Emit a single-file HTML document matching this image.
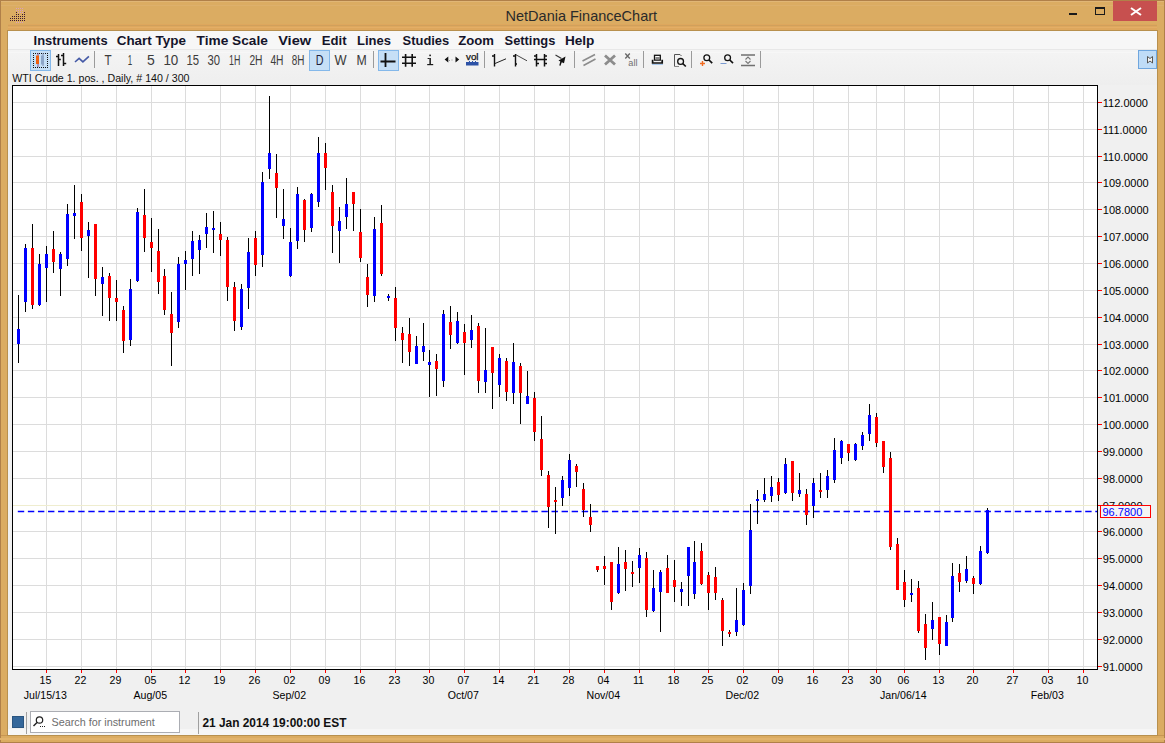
<!DOCTYPE html><html><head><meta charset="utf-8"><style>html,body{margin:0;padding:0;width:1165px;height:743px;overflow:hidden;background:#DBAC62}svg{display:block}text{font-family:"Liberation Sans",sans-serif}</style></head><body>
<svg width="1165" height="743" viewBox="0 0 1165 743">
<rect x="0" y="0" width="1165" height="743" fill="#DBAC62"/>
<rect x="0" y="0" width="1165" height="1" fill="#B08049"/>
<rect x="0" y="1" width="1165" height="1" fill="#E0B676"/>
<rect x="0" y="5" width="1165" height="1" fill="#DDB06C"/>
<rect x="8" y="24" width="1149" height="7" fill="#DEA75D"/>
<rect x="8" y="25" width="1149" height="1" fill="#D0A05C"/>
<rect x="8" y="27" width="1149" height="1" fill="#E3AE66"/>
<rect x="8" y="30" width="1149" height="1" fill="#C89652"/>
<rect x="0" y="735" width="1165" height="1" fill="#C89652"/>
<rect x="0" y="742" width="1165" height="1" fill="#B08049"/>
<rect x="0" y="0" width="1" height="743" fill="#B08049"/>
<rect x="1164" y="0" width="1" height="743" fill="#B08049"/>
<rect x="0" y="738" width="1165" height="2" fill="#E2B36C"/>
<rect x="16" y="8.0" width="1" height="1" fill="#D9A0C0"/>
<rect x="18" y="8.0" width="1" height="1" fill="#D9A0C0"/>
<rect x="20" y="8.0" width="1" height="1" fill="#D9A0C0"/>
<rect x="22" y="8.0" width="1" height="1" fill="#D9A0C0"/>
<rect x="16" y="10.0" width="1" height="1" fill="#D9A0C0"/>
<rect x="18" y="10.0" width="1" height="1" fill="#D9A0C0"/>
<rect x="20" y="10.0" width="1" height="1" fill="#D9A0C0"/>
<rect x="22" y="10.0" width="1" height="1" fill="#D9A0C0"/>
<rect x="18" y="12.0" width="1" height="1" fill="#D9A0C0"/>
<rect x="20" y="12.0" width="1" height="1" fill="#D9A0C0"/>
<rect x="22" y="12.0" width="1" height="1" fill="#D9A0C0"/>
<rect x="16" y="22.0" width="1" height="1" fill="#D9A0C0"/>
<rect x="18" y="22.0" width="1" height="1" fill="#D9A0C0"/>
<rect x="20" y="22.0" width="1" height="1" fill="#D9A0C0"/>
<rect x="22" y="22.0" width="1" height="1" fill="#D9A0C0"/>
<rect x="16" y="12.0" width="1" height="1" fill="#3A1A30"/>
<rect x="24" y="12.0" width="1" height="1" fill="#3A1A30"/>
<rect x="16" y="14.0" width="1" height="1" fill="#3A1A30"/>
<rect x="18" y="14.0" width="1" height="1" fill="#3A1A30"/>
<rect x="22" y="14.0" width="1" height="1" fill="#3A1A30"/>
<rect x="24" y="14.0" width="1" height="1" fill="#3A1A30"/>
<rect x="12" y="16.0" width="1" height="1" fill="#3A1A30"/>
<rect x="14" y="16.0" width="1" height="1" fill="#3A1A30"/>
<rect x="16" y="16.0" width="1" height="1" fill="#3A1A30"/>
<rect x="18" y="16.0" width="1" height="1" fill="#3A1A30"/>
<rect x="20" y="16.0" width="1" height="1" fill="#3A1A30"/>
<rect x="22" y="16.0" width="1" height="1" fill="#3A1A30"/>
<rect x="24" y="16.0" width="1" height="1" fill="#3A1A30"/>
<rect x="10" y="18.0" width="1" height="1" fill="#3A1A30"/>
<rect x="12" y="18.0" width="1" height="1" fill="#3A1A30"/>
<rect x="14" y="18.0" width="1" height="1" fill="#3A1A30"/>
<rect x="16" y="18.0" width="1" height="1" fill="#3A1A30"/>
<rect x="18" y="18.0" width="1" height="1" fill="#3A1A30"/>
<rect x="20" y="18.0" width="1" height="1" fill="#3A1A30"/>
<rect x="22" y="18.0" width="1" height="1" fill="#3A1A30"/>
<rect x="24" y="18.0" width="1" height="1" fill="#3A1A30"/>
<rect x="10" y="20.0" width="1" height="1" fill="#3A1A30"/>
<rect x="12" y="20.0" width="1" height="1" fill="#3A1A30"/>
<rect x="14" y="20.0" width="1" height="1" fill="#3A1A30"/>
<rect x="16" y="20.0" width="1" height="1" fill="#3A1A30"/>
<rect x="18" y="20.0" width="1" height="1" fill="#3A1A30"/>
<rect x="20" y="20.0" width="1" height="1" fill="#3A1A30"/>
<rect x="22" y="20.0" width="1" height="1" fill="#3A1A30"/>
<rect x="24" y="20.0" width="1" height="1" fill="#3A1A30"/>
<text x="581.3" y="20.5" text-anchor="middle" font-size="14.5" fill="#2A2A2A">NetDania FinanceChart</text>
<rect x="1069" y="13" width="8" height="2" fill="#1a1a1a"/>
<rect x="1095.5" y="7.5" width="9" height="7" fill="none" stroke="#1a1a1a" stroke-width="1"/><rect x="1095" y="7" width="10" height="2" fill="#1a1a1a"/>
<rect x="1113" y="1" width="44" height="20" fill="#C7504F"/>
<path d="M1131 8 L1141 15 M1141 8 L1131 15" stroke="#fff" stroke-width="2"/>
<rect x="7" y="30" width="1151" height="706" fill="#B8904E"/>
<rect x="8" y="31" width="1149" height="704" fill="#F0F0F0"/>
<rect x="8" y="729" width="1149" height="6" fill="#F6F6F6"/>
<rect x="8" y="31" width="1149" height="18" fill="#F7F7F7"/>
<rect x="8" y="49" width="1149" height="1" fill="#E8E8E8"/>
<defs><linearGradient id="tbg" x1="0" y1="0" x2="0" y2="1"><stop offset="0" stop-color="#F4F4F4"/><stop offset="1" stop-color="#EEEEEE"/></linearGradient></defs>
<rect x="8" y="50" width="1149" height="35" fill="url(#tbg)"/>
<rect x="8" y="52" width="1149" height="1" fill="#F7F7F7"/>
<text x="33.6" y="44.8" font-size="12.9" font-weight="bold" fill="#14142A" textLength="74.0" lengthAdjust="spacingAndGlyphs">Instruments</text>
<text x="116.7" y="44.8" font-size="12.9" font-weight="bold" fill="#14142A" textLength="69.2" lengthAdjust="spacingAndGlyphs">Chart Type</text>
<text x="196.6" y="44.8" font-size="12.9" font-weight="bold" fill="#14142A" textLength="71.2" lengthAdjust="spacingAndGlyphs">Time Scale</text>
<text x="278.2" y="44.8" font-size="12.9" font-weight="bold" fill="#14142A" textLength="32.9" lengthAdjust="spacingAndGlyphs">View</text>
<text x="321.79999999999995" y="44.8" font-size="12.9" font-weight="bold" fill="#14142A" textLength="24.8" lengthAdjust="spacingAndGlyphs">Edit</text>
<text x="357.0" y="44.8" font-size="12.9" font-weight="bold" fill="#14142A" textLength="33.9" lengthAdjust="spacingAndGlyphs">Lines</text>
<text x="402.59999999999997" y="44.8" font-size="12.9" font-weight="bold" fill="#14142A" textLength="46.6" lengthAdjust="spacingAndGlyphs">Studies</text>
<text x="458.29999999999995" y="44.8" font-size="12.9" font-weight="bold" fill="#14142A" textLength="35.7" lengthAdjust="spacingAndGlyphs">Zoom</text>
<text x="504.59999999999997" y="44.8" font-size="12.9" font-weight="bold" fill="#14142A" textLength="50.7" lengthAdjust="spacingAndGlyphs">Settings</text>
<text x="564.9" y="44.8" font-size="12.9" font-weight="bold" fill="#14142A" textLength="29.5" lengthAdjust="spacingAndGlyphs">Help</text>
<g id="toolbar">
<!-- candle pressed button -->
<rect x="30.5" y="50.5" width="20" height="20" fill="#C6DFF6" stroke="#84B8EA" stroke-width="1"/>
<g fill="#111"><rect x="33" y="53" width="1" height="1"/><rect x="35" y="53" width="1" height="1"/><rect x="37" y="53" width="1" height="1"/><rect x="39" y="53" width="1" height="1"/><rect x="41" y="53" width="1" height="1"/><rect x="43" y="53" width="1" height="1"/><rect x="45" y="53" width="1" height="1"/><rect x="47" y="53" width="1" height="1"/>
<rect x="33" y="67" width="1" height="1"/><rect x="35" y="67" width="1" height="1"/><rect x="37" y="67" width="1" height="1"/><rect x="39" y="67" width="1" height="1"/><rect x="41" y="67" width="1" height="1"/><rect x="43" y="67" width="1" height="1"/><rect x="45" y="67" width="1" height="1"/><rect x="47" y="67" width="1" height="1"/>
<rect x="33" y="55" width="1" height="1"/><rect x="33" y="57" width="1" height="1"/><rect x="33" y="59" width="1" height="1"/><rect x="33" y="61" width="1" height="1"/><rect x="33" y="63" width="1" height="1"/><rect x="33" y="65" width="1" height="1"/>
<rect x="47" y="55" width="1" height="1"/><rect x="47" y="57" width="1" height="1"/><rect x="47" y="59" width="1" height="1"/><rect x="47" y="61" width="1" height="1"/><rect x="47" y="63" width="1" height="1"/><rect x="47" y="65" width="1" height="1"/></g>
<rect x="37.5" y="53" width="1" height="14" fill="#8A4F8A"/>
<rect x="36" y="55.5" width="3" height="8.5" fill="#F06010"/>
<rect x="42.5" y="53" width="1" height="13" fill="#7E8EB0"/>
<rect x="41" y="55.5" width="3" height="9" fill="#8DA6C8"/>
<!-- OHLC icon -->
<path d="M58.5 54 V66 M56 56.5 H58.5 M58.5 59.5 H60.8 M63.5 53 V66 M61 55.5 H63.5 M63.5 63.5 H66.2" stroke="#111" stroke-width="1.5" fill="none"/>
<!-- line icon -->
<path d="M75 62 L79.1 58.4 L82.9 61.9 L88.9 56.4" stroke="#4459A6" stroke-width="1.6" fill="none"/>
<rect x="94" y="51" width="1" height="17" fill="#9A9A9A"/>
<g fill="#3C3C3C" font-size="14">
<text x="104.60" y="65" textLength="7.14" lengthAdjust="spacingAndGlyphs">T</text>
<text x="127.80" y="65" textLength="4.45" lengthAdjust="spacingAndGlyphs">1</text>
<text x="147.00" y="65" textLength="7.78" lengthAdjust="spacingAndGlyphs">5</text>
<text x="163.40" y="65" textLength="14.92" lengthAdjust="spacingAndGlyphs">10</text>
<text x="186.50" y="65" textLength="12.61" lengthAdjust="spacingAndGlyphs">15</text>
<text x="207.50" y="65" textLength="12.55" lengthAdjust="spacingAndGlyphs">30</text>
<text x="229.00" y="65" textLength="11.29" lengthAdjust="spacingAndGlyphs">1H</text>
<text x="249.40" y="65" textLength="13.12" lengthAdjust="spacingAndGlyphs">2H</text>
<text x="270.40" y="65" textLength="13.12" lengthAdjust="spacingAndGlyphs">4H</text>
<text x="291.80" y="65" textLength="12.70" lengthAdjust="spacingAndGlyphs">8H</text>
</g>
<rect x="309.5" y="50.5" width="20" height="20" fill="#C6DFF6" stroke="#84B8EA" stroke-width="1"/>
<g fill="#1E1E3C" font-size="14">
<text x="315.80" y="65" textLength="7.79" lengthAdjust="spacingAndGlyphs">D</text>
</g>
<g fill="#3A3A3A" font-size="14">
<text x="334.40" y="65" textLength="12.09" lengthAdjust="spacingAndGlyphs">W</text>
<text x="356.40" y="65" textLength="10.22" lengthAdjust="spacingAndGlyphs">M</text>
</g>
<rect x="373" y="51" width="1" height="17" fill="#9A9A9A"/>
<rect x="378.5" y="50.5" width="20" height="20" fill="#C6DFF6" stroke="#84B8EA" stroke-width="1"/>
<path d="M380.5 61.5 H395.5 M385.5 53 V67" stroke="#111" stroke-width="1.8" fill="none"/>
<!-- hash -->
<path d="M402 57.3 H416 M402 63.3 H416 M405.6 54 V66.7 M412.2 54 V66.7" stroke="#111" stroke-width="1.6" fill="none"/>
<!-- i -->
<g fill="#1a1a1a"><rect x="429.3" y="54.6" width="1.6" height="1.6"/><rect x="429.4" y="58" width="1.5" height="6.5"/><rect x="427.6" y="58" width="2" height="1"/><rect x="427.2" y="64" width="6" height="1.2"/></g>
<!-- arrows -->
<path d="M444.6 59.6 L448.3 56.6 V62.5 Z M459.2 59.6 L455.5 56.6 V62.5 Z" fill="#111"/><rect x="449" y="60" width="1" height="1" fill="#999"/><rect x="451.5" y="59.5" width="1" height="1" fill="#999"/>
<!-- vol -->
<text x="466" y="60" font-size="9.5" fill="#111" stroke="#111" stroke-width="0.25" textLength="12.5" lengthAdjust="spacingAndGlyphs">vol</text>
<rect x="466" y="62" width="12.5" height="3.5" fill="#2D52A6"/>
<rect x="469" y="61" width="1" height="1" fill="#2D52A6"/><rect x="472" y="61" width="1" height="1" fill="#2D52A6"/><rect x="475" y="61" width="1" height="1" fill="#2D52A6"/>
<rect x="484" y="51" width="1" height="17" fill="#9A9A9A"/>
<!-- line tool icons -->
<path d="M494.5 54 V66.5 M492 56 H494.5" stroke="#111" stroke-width="1.4" fill="none"/><path d="M495 63.5 L506 58.8" stroke="#222" stroke-width="1" fill="none"/>
<path d="M515.5 54 V66.5 M513 56 H515.5 M515.5 64 H517" stroke="#111" stroke-width="1.4" fill="none"/><path d="M516 54.8 L527 60.8" stroke="#333" stroke-width="0.9" fill="none"/>
<path d="M536.5 54 V66.5 M544.5 54 V66.5 M534 59.5 H547 M534 56 H536.5 M544.5 56 H547 M536.5 63.5 H539 M544.5 63.5 H547" stroke="#111" stroke-width="1.5" fill="none"/>
<path d="M555.5 55 L561.5 58.5" stroke="#333" stroke-width="1.1" fill="none"/><path d="M565.5 56.5 L564 63.2 L561.8 62.3 L560.3 66 L559.3 65.3 L560.3 61.5 L558.5 60.6 Z" fill="#111"/>
<rect x="574" y="51" width="1" height="17" fill="#9A9A9A"/>
<!-- gray tools -->
<path d="M582.5 61 L595 54.5 M583.5 65.5 L595.5 59" stroke="#8C8C8C" stroke-width="1.6" fill="none"/>
<path d="M605 55.5 L615 64.5 M615 55.5 L605 64.5" stroke="#8C8C8C" stroke-width="2.8" fill="none"/>
<path d="M625.3 53.5 L629.8 58.5 M629.8 53.5 L625.3 58.5" stroke="#666" stroke-width="1.3" fill="none"/>
<text x="628.3" y="65.6" font-size="9" fill="#707070" textLength="9.2" lengthAdjust="spacingAndGlyphs">all</text>
<rect x="643" y="51" width="1" height="17" fill="#9A9A9A"/>
<!-- printer -->
<rect x="654.5" y="55.3" width="5.8" height="4.8" fill="#fff" stroke="#111" stroke-width="1.3"/>
<rect x="655.5" y="57.5" width="4" height="1" fill="#111"/>
<path d="M652.6 59.8 V63 H662.2 V59.8" fill="none" stroke="#111" stroke-width="1.7"/>
<rect x="652" y="64" width="11" height="1" fill="#A8C8EC"/>
<!-- print preview -->
<path d="M674.5 66.5 V54.5 H680 L681.5 56" stroke="#555" stroke-width="1" fill="none"/>
<path d="M674.5 66.5 H679" stroke="#888" stroke-width="1" fill="none"/>
<circle cx="680.6" cy="61.4" r="2.9" fill="none" stroke="#111" stroke-width="1.3"/>
<path d="M682.7 63.5 L685.8 66.5" stroke="#111" stroke-width="1.7"/>
<rect x="691" y="51" width="1" height="17" fill="#9A9A9A"/>
<!-- zoom in -->
<circle cx="706.8" cy="57.8" r="2.9" fill="none" stroke="#111" stroke-width="1.3"/>
<path d="M709 60 L712.2 63.2" stroke="#111" stroke-width="1.7"/>
<path d="M700 63.5 H705 M702.5 61 V66" stroke="#F06A20" stroke-width="1.4"/>
<!-- zoom out -->
<circle cx="727.6" cy="57.8" r="2.9" fill="none" stroke="#111" stroke-width="1.3"/>
<path d="M729.8 60 L733 63.2" stroke="#111" stroke-width="1.7"/>
<path d="M720.5 63.5 H726.5" stroke="#7A9AD0" stroke-width="1"/>
<!-- fit -->
<path d="M741 55 H755 M741 65.5 H755" stroke="#707070" stroke-width="1.6"/>
<path d="M745.5 59.5 L748 57 L750.5 59.5 M745.5 61 L748 63.5 L750.5 61" stroke="#777" stroke-width="1.1" fill="none"/>
<rect x="760" y="51" width="1" height="17" fill="#9A9A9A"/>
<!-- right button -->
<rect x="1138.5" y="50.5" width="18" height="18" fill="#BFDCF7" stroke="#6FA6DE" stroke-width="1"/>
<path d="M1147.5 56.5 L1150 58.5 L1152.5 56.5 V63 L1150 61 L1147.5 63 Z" fill="#F4F4F4" stroke="#555" stroke-width="1"/>
</g>

<text x="12.3" y="81.7" font-size="10.65" fill="#111">WTI Crude 1. pos. , Daily, # 140 / 300</text>
<rect x="12" y="85" width="1085" height="584" fill="#FFFFFF"/>
<g shape-rendering="crispEdges">
<rect x="12" y="666" width="1085" height="1" fill="#DCDCDC"/>
<rect x="12" y="639" width="1085" height="1" fill="#DCDCDC"/>
<rect x="12" y="612" width="1085" height="1" fill="#DCDCDC"/>
<rect x="12" y="585" width="1085" height="1" fill="#DCDCDC"/>
<rect x="12" y="558" width="1085" height="1" fill="#DCDCDC"/>
<rect x="12" y="531" width="1085" height="1" fill="#DCDCDC"/>
<rect x="12" y="505" width="1085" height="1" fill="#DCDCDC"/>
<rect x="12" y="478" width="1085" height="1" fill="#DCDCDC"/>
<rect x="12" y="451" width="1085" height="1" fill="#DCDCDC"/>
<rect x="12" y="424" width="1085" height="1" fill="#DCDCDC"/>
<rect x="12" y="397" width="1085" height="1" fill="#DCDCDC"/>
<rect x="12" y="370" width="1085" height="1" fill="#DCDCDC"/>
<rect x="12" y="344" width="1085" height="1" fill="#DCDCDC"/>
<rect x="12" y="317" width="1085" height="1" fill="#DCDCDC"/>
<rect x="12" y="290" width="1085" height="1" fill="#DCDCDC"/>
<rect x="12" y="263" width="1085" height="1" fill="#DCDCDC"/>
<rect x="12" y="236" width="1085" height="1" fill="#DCDCDC"/>
<rect x="12" y="209" width="1085" height="1" fill="#DCDCDC"/>
<rect x="12" y="182" width="1085" height="1" fill="#DCDCDC"/>
<rect x="12" y="156" width="1085" height="1" fill="#DCDCDC"/>
<rect x="12" y="129" width="1085" height="1" fill="#DCDCDC"/>
<rect x="12" y="102" width="1085" height="1" fill="#DCDCDC"/>
<rect x="46" y="85" width="1" height="584" fill="#DCDCDC"/>
<rect x="81" y="85" width="1" height="584" fill="#DCDCDC"/>
<rect x="116" y="85" width="1" height="584" fill="#DCDCDC"/>
<rect x="151" y="85" width="1" height="584" fill="#DCDCDC"/>
<rect x="185" y="85" width="1" height="584" fill="#DCDCDC"/>
<rect x="220" y="85" width="1" height="584" fill="#DCDCDC"/>
<rect x="255" y="85" width="1" height="584" fill="#DCDCDC"/>
<rect x="290" y="85" width="1" height="584" fill="#DCDCDC"/>
<rect x="325" y="85" width="1" height="584" fill="#DCDCDC"/>
<rect x="360" y="85" width="1" height="584" fill="#DCDCDC"/>
<rect x="395" y="85" width="1" height="584" fill="#DCDCDC"/>
<rect x="429" y="85" width="1" height="584" fill="#DCDCDC"/>
<rect x="464" y="85" width="1" height="584" fill="#DCDCDC"/>
<rect x="499" y="85" width="1" height="584" fill="#DCDCDC"/>
<rect x="534" y="85" width="1" height="584" fill="#DCDCDC"/>
<rect x="569" y="85" width="1" height="584" fill="#DCDCDC"/>
<rect x="604" y="85" width="1" height="584" fill="#DCDCDC"/>
<rect x="639" y="85" width="1" height="584" fill="#DCDCDC"/>
<rect x="674" y="85" width="1" height="584" fill="#DCDCDC"/>
<rect x="708" y="85" width="1" height="584" fill="#DCDCDC"/>
<rect x="743" y="85" width="1" height="584" fill="#DCDCDC"/>
<rect x="778" y="85" width="1" height="584" fill="#DCDCDC"/>
<rect x="813" y="85" width="1" height="584" fill="#DCDCDC"/>
<rect x="848" y="85" width="1" height="584" fill="#DCDCDC"/>
<rect x="876" y="85" width="1" height="584" fill="#DCDCDC"/>
<rect x="904" y="85" width="1" height="584" fill="#DCDCDC"/>
<rect x="939" y="85" width="1" height="584" fill="#DCDCDC"/>
<rect x="973" y="85" width="1" height="584" fill="#DCDCDC"/>
<rect x="1013" y="85" width="1" height="584" fill="#DCDCDC"/>
<rect x="1048" y="85" width="1" height="584" fill="#DCDCDC"/>
<rect x="1083" y="85" width="1" height="584" fill="#DCDCDC"/>
</g>
<rect x="12" y="505" width="1085" height="1" fill="#EFEDCF"/>
<line x1="17.8" y1="511.5" x2="1097" y2="511.5" stroke="#0000FF" stroke-width="1.6" stroke-dasharray="6.4 3.67"/>
<g shape-rendering="crispEdges">
<rect x="18" y="295" width="1" height="68" fill="#000"/>
<rect x="17" y="329" width="3" height="15" fill="#0000FF"/>
<rect x="25" y="244" width="1" height="68" fill="#000"/>
<rect x="24" y="248" width="3" height="54" fill="#0000FF"/>
<rect x="32" y="224" width="1" height="85" fill="#000"/>
<rect x="31" y="248" width="3" height="57" fill="#FF0000"/>
<rect x="39" y="254" width="1" height="52" fill="#000"/>
<rect x="38" y="264" width="3" height="41" fill="#0000FF"/>
<rect x="46" y="246" width="1" height="56" fill="#000"/>
<rect x="45" y="254" width="3" height="14" fill="#0000FF"/>
<rect x="53" y="231" width="1" height="42" fill="#000"/>
<rect x="52" y="249" width="3" height="13" fill="#FF0000"/>
<rect x="60" y="252" width="1" height="44" fill="#000"/>
<rect x="59" y="254" width="3" height="15" fill="#0000FF"/>
<rect x="67" y="204" width="1" height="62" fill="#000"/>
<rect x="66" y="214" width="3" height="45" fill="#0000FF"/>
<rect x="74" y="185" width="1" height="54" fill="#000"/>
<rect x="73" y="213" width="3" height="3" fill="#0000FF"/>
<rect x="81" y="194" width="1" height="57" fill="#000"/>
<rect x="80" y="202" width="3" height="36" fill="#FF0000"/>
<rect x="88" y="222" width="1" height="56" fill="#000"/>
<rect x="87" y="230" width="3" height="6" fill="#0000FF"/>
<rect x="95" y="224" width="1" height="72" fill="#000"/>
<rect x="94" y="224" width="3" height="55" fill="#FF0000"/>
<rect x="102" y="267" width="1" height="49" fill="#000"/>
<rect x="101" y="277" width="3" height="7" fill="#0000FF"/>
<rect x="109" y="273" width="1" height="48" fill="#000"/>
<rect x="108" y="276" width="3" height="22" fill="#FF0000"/>
<rect x="116" y="280" width="1" height="41" fill="#000"/>
<rect x="115" y="298" width="3" height="4" fill="#FF0000"/>
<rect x="123" y="306" width="1" height="47" fill="#000"/>
<rect x="122" y="310" width="3" height="31" fill="#FF0000"/>
<rect x="130" y="279" width="1" height="67" fill="#000"/>
<rect x="129" y="289" width="3" height="51" fill="#0000FF"/>
<rect x="137" y="208" width="1" height="74" fill="#000"/>
<rect x="136" y="212" width="3" height="69" fill="#0000FF"/>
<rect x="144" y="189" width="1" height="63" fill="#000"/>
<rect x="143" y="215" width="3" height="23" fill="#FF0000"/>
<rect x="151" y="218" width="1" height="54" fill="#000"/>
<rect x="150" y="242" width="3" height="6" fill="#FF0000"/>
<rect x="158" y="229" width="1" height="65" fill="#000"/>
<rect x="157" y="251" width="3" height="31" fill="#FF0000"/>
<rect x="164" y="269" width="1" height="46" fill="#000"/>
<rect x="163" y="276" width="3" height="34" fill="#FF0000"/>
<rect x="171" y="292" width="1" height="74" fill="#000"/>
<rect x="170" y="314" width="3" height="19" fill="#FF0000"/>
<rect x="178" y="257" width="1" height="71" fill="#000"/>
<rect x="177" y="264" width="3" height="58" fill="#0000FF"/>
<rect x="185" y="251" width="1" height="39" fill="#000"/>
<rect x="184" y="260" width="3" height="4" fill="#0000FF"/>
<rect x="192" y="231" width="1" height="45" fill="#000"/>
<rect x="191" y="241" width="3" height="18" fill="#0000FF"/>
<rect x="199" y="235" width="1" height="39" fill="#000"/>
<rect x="198" y="240" width="3" height="10" fill="#0000FF"/>
<rect x="206" y="213" width="1" height="35" fill="#000"/>
<rect x="205" y="227" width="3" height="7" fill="#0000FF"/>
<rect x="213" y="211" width="1" height="42" fill="#000"/>
<rect x="212" y="228" width="3" height="2" fill="#0000FF"/>
<rect x="220" y="222" width="1" height="34" fill="#000"/>
<rect x="219" y="234" width="3" height="6" fill="#FF0000"/>
<rect x="227" y="237" width="1" height="64" fill="#000"/>
<rect x="226" y="240" width="3" height="47" fill="#FF0000"/>
<rect x="234" y="282" width="1" height="49" fill="#000"/>
<rect x="233" y="287" width="3" height="34" fill="#FF0000"/>
<rect x="241" y="284" width="1" height="46" fill="#000"/>
<rect x="240" y="289" width="3" height="38" fill="#0000FF"/>
<rect x="248" y="238" width="1" height="71" fill="#000"/>
<rect x="247" y="252" width="3" height="36" fill="#0000FF"/>
<rect x="255" y="231" width="1" height="45" fill="#000"/>
<rect x="254" y="238" width="3" height="27" fill="#FF0000"/>
<rect x="262" y="172" width="1" height="95" fill="#000"/>
<rect x="261" y="182" width="3" height="73" fill="#0000FF"/>
<rect x="269" y="96" width="1" height="83" fill="#000"/>
<rect x="268" y="153" width="3" height="16" fill="#0000FF"/>
<rect x="276" y="154" width="1" height="64" fill="#000"/>
<rect x="275" y="173" width="3" height="15" fill="#FF0000"/>
<rect x="283" y="189" width="1" height="50" fill="#000"/>
<rect x="282" y="219" width="3" height="7" fill="#0000FF"/>
<rect x="290" y="228" width="1" height="49" fill="#000"/>
<rect x="289" y="242" width="3" height="34" fill="#0000FF"/>
<rect x="297" y="187" width="1" height="62" fill="#000"/>
<rect x="296" y="194" width="3" height="47" fill="#0000FF"/>
<rect x="304" y="199" width="1" height="43" fill="#000"/>
<rect x="303" y="200" width="3" height="30" fill="#FF0000"/>
<rect x="311" y="193" width="1" height="39" fill="#000"/>
<rect x="310" y="194" width="3" height="34" fill="#0000FF"/>
<rect x="318" y="137" width="1" height="70" fill="#000"/>
<rect x="317" y="153" width="3" height="49" fill="#0000FF"/>
<rect x="325" y="143" width="1" height="47" fill="#000"/>
<rect x="324" y="153" width="3" height="15" fill="#FF0000"/>
<rect x="332" y="185" width="1" height="68" fill="#000"/>
<rect x="331" y="192" width="3" height="34" fill="#FF0000"/>
<rect x="339" y="207" width="1" height="56" fill="#000"/>
<rect x="338" y="221" width="3" height="10" fill="#0000FF"/>
<rect x="346" y="178" width="1" height="51" fill="#000"/>
<rect x="345" y="204" width="3" height="13" fill="#0000FF"/>
<rect x="353" y="192" width="1" height="39" fill="#000"/>
<rect x="352" y="192" width="3" height="12" fill="#FF0000"/>
<rect x="360" y="209" width="1" height="53" fill="#000"/>
<rect x="359" y="232" width="3" height="26" fill="#FF0000"/>
<rect x="367" y="264" width="1" height="43" fill="#000"/>
<rect x="366" y="277" width="3" height="18" fill="#FF0000"/>
<rect x="374" y="217" width="1" height="85" fill="#000"/>
<rect x="373" y="229" width="3" height="67" fill="#0000FF"/>
<rect x="381" y="205" width="1" height="71" fill="#000"/>
<rect x="380" y="223" width="3" height="51" fill="#FF0000"/>
<rect x="388" y="294" width="1" height="7" fill="#000"/>
<rect x="387" y="296" width="3" height="2" fill="#0000FF"/>
<rect x="395" y="287" width="1" height="54" fill="#000"/>
<rect x="394" y="298" width="3" height="30" fill="#FF0000"/>
<rect x="402" y="327" width="1" height="36" fill="#000"/>
<rect x="401" y="333" width="3" height="7" fill="#FF0000"/>
<rect x="409" y="318" width="1" height="48" fill="#000"/>
<rect x="408" y="334" width="3" height="18" fill="#FF0000"/>
<rect x="416" y="336" width="1" height="28" fill="#000"/>
<rect x="415" y="346" width="3" height="18" fill="#0000FF"/>
<rect x="423" y="323" width="1" height="38" fill="#000"/>
<rect x="422" y="346" width="3" height="6" fill="#0000FF"/>
<rect x="429" y="350" width="1" height="47" fill="#000"/>
<rect x="428" y="362" width="3" height="3" fill="#0000FF"/>
<rect x="436" y="354" width="1" height="42" fill="#000"/>
<rect x="435" y="361" width="3" height="8" fill="#FF0000"/>
<rect x="443" y="310" width="1" height="77" fill="#000"/>
<rect x="442" y="314" width="3" height="67" fill="#0000FF"/>
<rect x="450" y="306" width="1" height="43" fill="#000"/>
<rect x="449" y="322" width="3" height="13" fill="#FF0000"/>
<rect x="457" y="312" width="1" height="32" fill="#000"/>
<rect x="456" y="321" width="3" height="22" fill="#0000FF"/>
<rect x="464" y="324" width="1" height="51" fill="#000"/>
<rect x="463" y="332" width="3" height="11" fill="#FF0000"/>
<rect x="471" y="315" width="1" height="33" fill="#000"/>
<rect x="470" y="330" width="3" height="10" fill="#0000FF"/>
<rect x="478" y="323" width="1" height="70" fill="#000"/>
<rect x="477" y="326" width="3" height="55" fill="#FF0000"/>
<rect x="485" y="328" width="1" height="65" fill="#000"/>
<rect x="484" y="370" width="3" height="12" fill="#0000FF"/>
<rect x="492" y="347" width="1" height="62" fill="#000"/>
<rect x="491" y="347" width="3" height="26" fill="#FF0000"/>
<rect x="499" y="354" width="1" height="43" fill="#000"/>
<rect x="498" y="358" width="3" height="27" fill="#0000FF"/>
<rect x="506" y="358" width="1" height="43" fill="#000"/>
<rect x="505" y="361" width="3" height="31" fill="#FF0000"/>
<rect x="513" y="343" width="1" height="61" fill="#000"/>
<rect x="512" y="362" width="3" height="31" fill="#0000FF"/>
<rect x="520" y="363" width="1" height="61" fill="#000"/>
<rect x="519" y="366" width="3" height="27" fill="#FF0000"/>
<rect x="527" y="371" width="1" height="33" fill="#000"/>
<rect x="526" y="396" width="3" height="8" fill="#0000FF"/>
<rect x="534" y="392" width="1" height="49" fill="#000"/>
<rect x="533" y="398" width="3" height="34" fill="#FF0000"/>
<rect x="541" y="416" width="1" height="60" fill="#000"/>
<rect x="540" y="439" width="3" height="31" fill="#FF0000"/>
<rect x="548" y="471" width="1" height="57" fill="#000"/>
<rect x="547" y="475" width="3" height="32" fill="#FF0000"/>
<rect x="555" y="487" width="1" height="47" fill="#000"/>
<rect x="554" y="500" width="3" height="2" fill="#FF0000"/>
<rect x="562" y="476" width="1" height="30" fill="#000"/>
<rect x="561" y="480" width="3" height="18" fill="#0000FF"/>
<rect x="569" y="454" width="1" height="42" fill="#000"/>
<rect x="568" y="460" width="3" height="28" fill="#0000FF"/>
<rect x="576" y="464" width="1" height="23" fill="#000"/>
<rect x="575" y="466" width="3" height="6" fill="#FF0000"/>
<rect x="583" y="483" width="1" height="34" fill="#000"/>
<rect x="582" y="489" width="3" height="21" fill="#FF0000"/>
<rect x="590" y="504" width="1" height="28" fill="#000"/>
<rect x="589" y="517" width="3" height="8" fill="#FF0000"/>
<rect x="597" y="566" width="1" height="6" fill="#000"/>
<rect x="596" y="566" width="3" height="4" fill="#FF0000"/>
<rect x="604" y="556" width="1" height="29" fill="#000"/>
<rect x="603" y="566" width="3" height="3" fill="#FF0000"/>
<rect x="611" y="562" width="1" height="48" fill="#000"/>
<rect x="610" y="562" width="3" height="40" fill="#FF0000"/>
<rect x="618" y="547" width="1" height="47" fill="#000"/>
<rect x="617" y="564" width="3" height="29" fill="#0000FF"/>
<rect x="625" y="550" width="1" height="41" fill="#000"/>
<rect x="624" y="562" width="3" height="7" fill="#FF0000"/>
<rect x="632" y="561" width="1" height="26" fill="#000"/>
<rect x="631" y="572" width="3" height="2" fill="#FF0000"/>
<rect x="639" y="548" width="1" height="35" fill="#000"/>
<rect x="638" y="555" width="3" height="13" fill="#0000FF"/>
<rect x="646" y="552" width="1" height="65" fill="#000"/>
<rect x="645" y="558" width="3" height="52" fill="#FF0000"/>
<rect x="653" y="570" width="1" height="42" fill="#000"/>
<rect x="652" y="588" width="3" height="23" fill="#0000FF"/>
<rect x="660" y="570" width="1" height="62" fill="#000"/>
<rect x="659" y="572" width="3" height="20" fill="#0000FF"/>
<rect x="667" y="555" width="1" height="38" fill="#000"/>
<rect x="666" y="568" width="3" height="25" fill="#FF0000"/>
<rect x="674" y="560" width="1" height="42" fill="#000"/>
<rect x="673" y="580" width="3" height="7" fill="#FF0000"/>
<rect x="681" y="582" width="1" height="24" fill="#000"/>
<rect x="680" y="589" width="3" height="3" fill="#0000FF"/>
<rect x="688" y="547" width="1" height="59" fill="#000"/>
<rect x="687" y="547" width="3" height="29" fill="#0000FF"/>
<rect x="694" y="541" width="1" height="58" fill="#000"/>
<rect x="693" y="562" width="3" height="32" fill="#0000FF"/>
<rect x="701" y="543" width="1" height="42" fill="#000"/>
<rect x="700" y="551" width="3" height="33" fill="#FF0000"/>
<rect x="708" y="572" width="1" height="38" fill="#000"/>
<rect x="707" y="575" width="3" height="18" fill="#FF0000"/>
<rect x="715" y="567" width="1" height="33" fill="#000"/>
<rect x="714" y="577" width="3" height="16" fill="#FF0000"/>
<rect x="722" y="598" width="1" height="48" fill="#000"/>
<rect x="721" y="600" width="3" height="31" fill="#FF0000"/>
<rect x="729" y="630" width="1" height="7" fill="#000"/>
<rect x="728" y="632" width="3" height="2" fill="#FF0000"/>
<rect x="736" y="588" width="1" height="48" fill="#000"/>
<rect x="735" y="620" width="3" height="12" fill="#0000FF"/>
<rect x="743" y="583" width="1" height="43" fill="#000"/>
<rect x="742" y="590" width="3" height="35" fill="#0000FF"/>
<rect x="750" y="504" width="1" height="90" fill="#000"/>
<rect x="749" y="530" width="3" height="56" fill="#0000FF"/>
<rect x="757" y="490" width="1" height="34" fill="#000"/>
<rect x="756" y="499" width="3" height="2" fill="#0000FF"/>
<rect x="764" y="478" width="1" height="24" fill="#000"/>
<rect x="763" y="494" width="3" height="6" fill="#0000FF"/>
<rect x="771" y="476" width="1" height="26" fill="#000"/>
<rect x="770" y="487" width="3" height="9" fill="#0000FF"/>
<rect x="778" y="478" width="1" height="23" fill="#000"/>
<rect x="777" y="482" width="3" height="13" fill="#FF0000"/>
<rect x="785" y="458" width="1" height="36" fill="#000"/>
<rect x="784" y="464" width="3" height="29" fill="#0000FF"/>
<rect x="792" y="461" width="1" height="40" fill="#000"/>
<rect x="791" y="461" width="3" height="32" fill="#FF0000"/>
<rect x="799" y="473" width="1" height="24" fill="#000"/>
<rect x="798" y="490" width="3" height="4" fill="#0000FF"/>
<rect x="806" y="489" width="1" height="36" fill="#000"/>
<rect x="805" y="494" width="3" height="21" fill="#FF0000"/>
<rect x="813" y="478" width="1" height="40" fill="#000"/>
<rect x="812" y="483" width="3" height="23" fill="#0000FF"/>
<rect x="820" y="473" width="1" height="25" fill="#000"/>
<rect x="819" y="490" width="3" height="2" fill="#FF0000"/>
<rect x="827" y="470" width="1" height="28" fill="#000"/>
<rect x="826" y="476" width="3" height="14" fill="#0000FF"/>
<rect x="834" y="438" width="1" height="45" fill="#000"/>
<rect x="833" y="450" width="3" height="30" fill="#0000FF"/>
<rect x="841" y="440" width="1" height="24" fill="#000"/>
<rect x="840" y="441" width="3" height="17" fill="#0000FF"/>
<rect x="848" y="444" width="1" height="17" fill="#000"/>
<rect x="847" y="444" width="3" height="9" fill="#FF0000"/>
<rect x="855" y="443" width="1" height="18" fill="#000"/>
<rect x="854" y="444" width="3" height="16" fill="#0000FF"/>
<rect x="862" y="432" width="1" height="18" fill="#000"/>
<rect x="861" y="435" width="3" height="11" fill="#0000FF"/>
<rect x="869" y="404" width="1" height="37" fill="#000"/>
<rect x="868" y="415" width="3" height="19" fill="#0000FF"/>
<rect x="876" y="413" width="1" height="34" fill="#000"/>
<rect x="875" y="417" width="3" height="26" fill="#FF0000"/>
<rect x="883" y="441" width="1" height="32" fill="#000"/>
<rect x="882" y="441" width="3" height="26" fill="#FF0000"/>
<rect x="890" y="452" width="1" height="98" fill="#000"/>
<rect x="889" y="458" width="3" height="89" fill="#FF0000"/>
<rect x="897" y="538" width="1" height="52" fill="#000"/>
<rect x="896" y="544" width="3" height="46" fill="#FF0000"/>
<rect x="904" y="570" width="1" height="37" fill="#000"/>
<rect x="903" y="582" width="3" height="18" fill="#FF0000"/>
<rect x="911" y="579" width="1" height="23" fill="#000"/>
<rect x="910" y="593" width="3" height="2" fill="#0000FF"/>
<rect x="918" y="581" width="1" height="52" fill="#000"/>
<rect x="917" y="588" width="3" height="43" fill="#FF0000"/>
<rect x="925" y="614" width="1" height="46" fill="#000"/>
<rect x="924" y="624" width="3" height="24" fill="#FF0000"/>
<rect x="932" y="602" width="1" height="38" fill="#000"/>
<rect x="931" y="620" width="3" height="9" fill="#0000FF"/>
<rect x="939" y="617" width="1" height="38" fill="#000"/>
<rect x="938" y="617" width="3" height="27" fill="#FF0000"/>
<rect x="946" y="615" width="1" height="31" fill="#000"/>
<rect x="945" y="622" width="3" height="24" fill="#0000FF"/>
<rect x="952" y="563" width="1" height="59" fill="#000"/>
<rect x="951" y="576" width="3" height="42" fill="#0000FF"/>
<rect x="959" y="564" width="1" height="28" fill="#000"/>
<rect x="958" y="573" width="3" height="9" fill="#FF0000"/>
<rect x="966" y="556" width="1" height="27" fill="#000"/>
<rect x="965" y="569" width="3" height="12" fill="#0000FF"/>
<rect x="973" y="576" width="1" height="18" fill="#000"/>
<rect x="972" y="578" width="3" height="6" fill="#FF0000"/>
<rect x="980" y="546" width="1" height="39" fill="#000"/>
<rect x="979" y="551" width="3" height="33" fill="#0000FF"/>
<rect x="987" y="508" width="1" height="46" fill="#000"/>
<rect x="986" y="510" width="3" height="43" fill="#0000FF"/>
</g>
<g shape-rendering="crispEdges">
<rect x="12" y="85" width="1086" height="1" fill="#000"/>
<rect x="12" y="669" width="1086" height="1" fill="#000"/>
<rect x="12" y="85" width="1" height="585" fill="#000"/>
<rect x="1097" y="85" width="1" height="585" fill="#000"/>
</g>
<rect x="1098" y="666" width="4" height="1" fill="#FF0000"/>
<text x="1102.8" y="671" font-size="11" fill="#000">91.0000</text>
<rect x="1098" y="639" width="4" height="1" fill="#FF0000"/>
<text x="1102.8" y="644" font-size="11" fill="#000">92.0000</text>
<rect x="1098" y="612" width="4" height="1" fill="#FF0000"/>
<text x="1102.8" y="617" font-size="11" fill="#000">93.0000</text>
<rect x="1098" y="585" width="4" height="1" fill="#FF0000"/>
<text x="1102.8" y="590" font-size="11" fill="#000">94.0000</text>
<rect x="1098" y="558" width="4" height="1" fill="#FF0000"/>
<text x="1102.8" y="563" font-size="11" fill="#000">95.0000</text>
<rect x="1098" y="531" width="4" height="1" fill="#FF0000"/>
<text x="1102.8" y="536" font-size="11" fill="#000">96.0000</text>
<rect x="1098" y="505" width="4" height="1" fill="#FF0000"/>
<text x="1102.8" y="510" font-size="11" fill="#000">97.0000</text>
<rect x="1098" y="478" width="4" height="1" fill="#FF0000"/>
<text x="1102.8" y="483" font-size="11" fill="#000">98.0000</text>
<rect x="1098" y="451" width="4" height="1" fill="#FF0000"/>
<text x="1102.8" y="456" font-size="11" fill="#000">99.0000</text>
<rect x="1098" y="424" width="4" height="1" fill="#FF0000"/>
<text x="1102.8" y="429" font-size="11" fill="#000">100.0000</text>
<rect x="1098" y="397" width="4" height="1" fill="#FF0000"/>
<text x="1102.8" y="402" font-size="11" fill="#000">101.0000</text>
<rect x="1098" y="370" width="4" height="1" fill="#FF0000"/>
<text x="1102.8" y="375" font-size="11" fill="#000">102.0000</text>
<rect x="1098" y="344" width="4" height="1" fill="#FF0000"/>
<text x="1102.8" y="349" font-size="11" fill="#000">103.0000</text>
<rect x="1098" y="317" width="4" height="1" fill="#FF0000"/>
<text x="1102.8" y="322" font-size="11" fill="#000">104.0000</text>
<rect x="1098" y="290" width="4" height="1" fill="#FF0000"/>
<text x="1102.8" y="295" font-size="11" fill="#000">105.0000</text>
<rect x="1098" y="263" width="4" height="1" fill="#FF0000"/>
<text x="1102.8" y="268" font-size="11" fill="#000">106.0000</text>
<rect x="1098" y="236" width="4" height="1" fill="#FF0000"/>
<text x="1102.8" y="241" font-size="11" fill="#000">107.0000</text>
<rect x="1098" y="209" width="4" height="1" fill="#FF0000"/>
<text x="1102.8" y="214" font-size="11" fill="#000">108.0000</text>
<rect x="1098" y="182" width="4" height="1" fill="#FF0000"/>
<text x="1102.8" y="187" font-size="11" fill="#000">109.0000</text>
<rect x="1098" y="156" width="4" height="1" fill="#FF0000"/>
<text x="1102.8" y="161" font-size="11" fill="#000">110.0000</text>
<rect x="1098" y="129" width="4" height="1" fill="#FF0000"/>
<text x="1102.8" y="134" font-size="11" fill="#000">111.0000</text>
<rect x="1098" y="102" width="4" height="1" fill="#FF0000"/>
<text x="1102.8" y="107" font-size="11" fill="#000">112.0000</text>
<rect x="1100.5" y="505.5" width="50" height="12" fill="#F4F4F4" stroke="#FF0000" stroke-width="1"/>
<text x="1102.5" y="516" font-size="11" fill="#0000FF">96.7800</text>
<rect x="46" y="670" width="1" height="3" fill="#FF0000"/>
<text x="45.5" y="683.6" text-anchor="middle" font-size="10.6" fill="#000">15</text>
<rect x="81" y="670" width="1" height="3" fill="#FF0000"/>
<text x="80.5" y="683.6" text-anchor="middle" font-size="10.6" fill="#000">22</text>
<rect x="116" y="670" width="1" height="3" fill="#FF0000"/>
<text x="115.5" y="683.6" text-anchor="middle" font-size="10.6" fill="#000">29</text>
<rect x="151" y="670" width="1" height="3" fill="#FF0000"/>
<text x="150.5" y="683.6" text-anchor="middle" font-size="10.6" fill="#000">05</text>
<rect x="185" y="670" width="1" height="3" fill="#FF0000"/>
<text x="184.5" y="683.6" text-anchor="middle" font-size="10.6" fill="#000">12</text>
<rect x="220" y="670" width="1" height="3" fill="#FF0000"/>
<text x="219.5" y="683.6" text-anchor="middle" font-size="10.6" fill="#000">19</text>
<rect x="255" y="670" width="1" height="3" fill="#FF0000"/>
<text x="254.5" y="683.6" text-anchor="middle" font-size="10.6" fill="#000">26</text>
<rect x="290" y="670" width="1" height="3" fill="#FF0000"/>
<text x="289.5" y="683.6" text-anchor="middle" font-size="10.6" fill="#000">02</text>
<rect x="325" y="670" width="1" height="3" fill="#FF0000"/>
<text x="324.5" y="683.6" text-anchor="middle" font-size="10.6" fill="#000">09</text>
<rect x="360" y="670" width="1" height="3" fill="#FF0000"/>
<text x="359.5" y="683.6" text-anchor="middle" font-size="10.6" fill="#000">16</text>
<rect x="395" y="670" width="1" height="3" fill="#FF0000"/>
<text x="394.5" y="683.6" text-anchor="middle" font-size="10.6" fill="#000">23</text>
<rect x="429" y="670" width="1" height="3" fill="#FF0000"/>
<text x="428.5" y="683.6" text-anchor="middle" font-size="10.6" fill="#000">30</text>
<rect x="464" y="670" width="1" height="3" fill="#FF0000"/>
<text x="463.5" y="683.6" text-anchor="middle" font-size="10.6" fill="#000">07</text>
<rect x="499" y="670" width="1" height="3" fill="#FF0000"/>
<text x="498.5" y="683.6" text-anchor="middle" font-size="10.6" fill="#000">14</text>
<rect x="534" y="670" width="1" height="3" fill="#FF0000"/>
<text x="533.5" y="683.6" text-anchor="middle" font-size="10.6" fill="#000">21</text>
<rect x="569" y="670" width="1" height="3" fill="#FF0000"/>
<text x="568.5" y="683.6" text-anchor="middle" font-size="10.6" fill="#000">28</text>
<rect x="604" y="670" width="1" height="3" fill="#FF0000"/>
<text x="603.5" y="683.6" text-anchor="middle" font-size="10.6" fill="#000">04</text>
<rect x="639" y="670" width="1" height="3" fill="#FF0000"/>
<text x="638.5" y="683.6" text-anchor="middle" font-size="10.6" fill="#000">11</text>
<rect x="674" y="670" width="1" height="3" fill="#FF0000"/>
<text x="673.5" y="683.6" text-anchor="middle" font-size="10.6" fill="#000">18</text>
<rect x="708" y="670" width="1" height="3" fill="#FF0000"/>
<text x="707.5" y="683.6" text-anchor="middle" font-size="10.6" fill="#000">25</text>
<rect x="743" y="670" width="1" height="3" fill="#FF0000"/>
<text x="742.5" y="683.6" text-anchor="middle" font-size="10.6" fill="#000">02</text>
<rect x="778" y="670" width="1" height="3" fill="#FF0000"/>
<text x="777.5" y="683.6" text-anchor="middle" font-size="10.6" fill="#000">09</text>
<rect x="813" y="670" width="1" height="3" fill="#FF0000"/>
<text x="812.5" y="683.6" text-anchor="middle" font-size="10.6" fill="#000">16</text>
<rect x="848" y="670" width="1" height="3" fill="#FF0000"/>
<text x="847.5" y="683.6" text-anchor="middle" font-size="10.6" fill="#000">23</text>
<rect x="876" y="670" width="1" height="3" fill="#FF0000"/>
<text x="875.5" y="683.6" text-anchor="middle" font-size="10.6" fill="#000">30</text>
<rect x="904" y="670" width="1" height="3" fill="#FF0000"/>
<text x="903.5" y="683.6" text-anchor="middle" font-size="10.6" fill="#000">06</text>
<rect x="939" y="670" width="1" height="3" fill="#FF0000"/>
<text x="938.5" y="683.6" text-anchor="middle" font-size="10.6" fill="#000">13</text>
<rect x="973" y="670" width="1" height="3" fill="#FF0000"/>
<text x="972.5" y="683.6" text-anchor="middle" font-size="10.6" fill="#000">20</text>
<rect x="1013" y="670" width="1" height="3" fill="#FF0000"/>
<text x="1012.5" y="683.6" text-anchor="middle" font-size="10.6" fill="#000">27</text>
<rect x="1048" y="670" width="1" height="3" fill="#FF0000"/>
<text x="1047.5" y="683.6" text-anchor="middle" font-size="10.6" fill="#000">03</text>
<rect x="1083" y="670" width="1" height="3" fill="#FF0000"/>
<text x="1082.5" y="683.6" text-anchor="middle" font-size="10.6" fill="#000">10</text>
<text x="45.3" y="699" text-anchor="middle" font-size="10.6" fill="#000">Jul/15/13</text>
<text x="150.3" y="699" text-anchor="middle" font-size="10.6" fill="#000">Aug/05</text>
<text x="289.3" y="699" text-anchor="middle" font-size="10.6" fill="#000">Sep/02</text>
<text x="463.3" y="699" text-anchor="middle" font-size="10.6" fill="#000">Oct/07</text>
<text x="603.3" y="699" text-anchor="middle" font-size="10.6" fill="#000">Nov/04</text>
<text x="742.3" y="699" text-anchor="middle" font-size="10.6" fill="#000">Dec/02</text>
<text x="903.3" y="699" text-anchor="middle" font-size="10.6" fill="#000">Jan/06/14</text>
<text x="1047.3" y="699" text-anchor="middle" font-size="10.6" fill="#000">Feb/03</text>
<rect x="12.5" y="716.5" width="11" height="11" fill="#34679A" stroke="#2A5580" stroke-width="1"/>
<rect x="26" y="712" width="1" height="22" fill="#A0A0A0"/>
<rect x="30.5" y="711.5" width="149" height="21" fill="#FFFFFF" stroke="#ABADB3" stroke-width="1"/>
<circle cx="39.5" cy="720" r="3.2" fill="none" stroke="#222" stroke-width="1.2"/><path d="M37 722.5 L33.5 726" stroke="#222" stroke-width="1.5"/>
<rect x="40" y="726" width="1" height="1" fill="#222"/><rect x="42" y="726" width="1" height="1" fill="#222"/><rect x="44" y="726" width="1" height="1" fill="#222"/>
<text x="51.5" y="725.8" font-size="10.8" fill="#6D6D6D">Search for instrument</text>
<rect x="198" y="712" width="1" height="22" fill="#A0A0A0"/>
<text x="202.4" y="727.2" font-size="11.9" font-weight="bold" fill="#111">21 Jan 2014 19:00:00 EST</text>
</svg></body></html>
